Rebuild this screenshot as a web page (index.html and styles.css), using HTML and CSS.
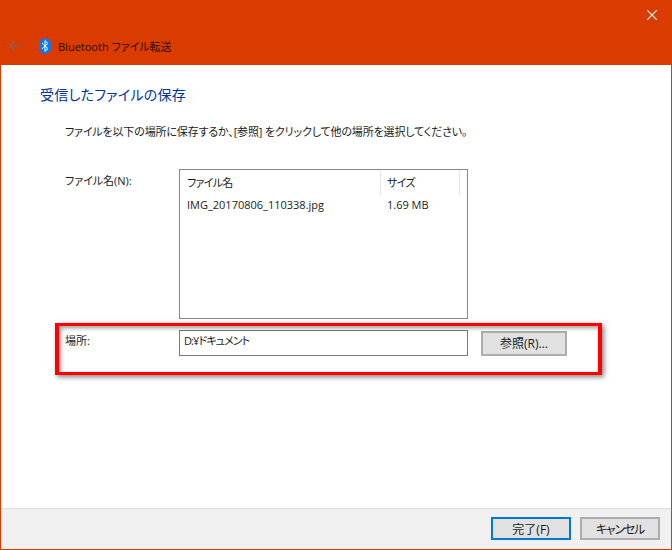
FILE: index.html
```html
<!DOCTYPE html>
<html lang="ja">
<head>
<meta charset="utf-8">
<title>Bluetooth ファイル転送</title>
<link rel="stylesheet" href="styles.css">
</head>
<body>
<div class="window">
  <header class="titlebar">
    <div class="close-row">
      <svg class="close" width="10" height="10" viewBox="0 0 10 10"><path d="M0 0L10 10M10 0L0 10" stroke="#fff" stroke-width="1.1" fill="none"/></svg>
    </div>
    <div class="nav-row">
      <svg class="back" width="13" height="12" viewBox="0 0 13 12"><path d="M6 .8L1 6l5 5.2M1 6h12" stroke="#9c5a44" stroke-width="1.6" fill="none"/></svg>
      <svg class="bt" width="12" height="16" viewBox="0 0 12 16"><rect width="12" height="16" rx="6" ry="6.5" fill="#0a7ae8"/><path d="M3 5.2l6 5.4-3 2.7V2.7l3 2.7-6 5.4" stroke="#fff" stroke-width="1" fill="none"/></svg>
      <span class="nav-title">Bluetooth ファイル転送</span>
    </div>
  </header>
  <main class="content">
    <h1 class="heading">受信したファイルの保存</h1>
    <p class="intro">ファイルを以下の場所に保存するか、[参照] をクリックして他の場所を選択してください。</p>
    <div class="files-row">
      <div class="label">ファイル名(N):</div>
      <div class="listbox">
        <div class="list-head">
          <div class="col-name">ファイル名</div>
          <div class="col-size">サイズ</div>
        </div>
        <div class="list-item">
          <div class="col-name">IMG_20170806_110338.jpg</div>
          <div class="col-size">1.69 MB</div>
        </div>
      </div>
    </div>
    <div class="place-row">
      <div class="label">場所:</div>
      <div class="path-input">D:¥ドキュメント</div>
      <button class="btn browse">参照(R)...</button>
    </div>
    <div class="highlight"></div>
  </main>
  <footer class="footer">
    <button class="btn btn-primary">完了(F)</button>
    <button class="btn btn-cancel">キャンセル</button>
  </footer>
</div>
</body>
</html>
```
FILE: styles.css
```css
* { box-sizing: border-box; }
html, body { margin: 0; padding: 0; }
body {
  width: 672px;
  height: 550px;
  overflow: hidden;
  font-family: "Open Sans", "Noto Sans CJK JP", sans-serif;
  font-size: 11px;
  font-feature-settings: "palt";
  color: #1a1a1a;
  background: #fff;
}
.window {
  width: 672px;
  height: 550px;
  display: flex;
  flex-direction: column;
  border: 1px solid #da3b01;
  border-top: 0;
}
.titlebar {
  height: 65px;
  margin: 0 -1px;
  background: #da3b01;
  display: flex;
  flex-direction: column;
}
.close-row {
  height: 30px;
  display: flex;
  justify-content: flex-end;
  padding: 10px 15px 0 0;
}
.nav-row {
  height: 31px;
  display: flex;
  align-items: center;
  padding-left: 9px;
}
.back { margin-right: 17px; }
.bt { margin-right: 7px; }
.nav-title { color: #2a0f06; }
.content {
  flex: 1;
  position: relative;
  padding: 20px 0 0 39px;
}
.heading {
  margin: 0;
  font-size: 14px;
  font-weight: 400;
  line-height: 20px;
  letter-spacing: .25px;
  color: #003399;
}
.intro {
  margin: 19px 0 0 25px;
  letter-spacing: -.15px;
  line-height: 16px;
}
.files-row {
  display: flex;
  margin: 29px 0 0 25px;
}
.label {
  width: 114px;
  flex: none;
  line-height: 16px;
  padding-top: 4px;
}
.listbox {
  width: 289px;
  height: 150px;
  border: 1px solid #828790;
  padding: 0 7px 0 0;
}
.list-head, .list-item { display: flex; }
.list-head {
  height: 25px;
  border-right: 1px solid #e5e5e5;
}
.list-item { height: 19px; align-items: center; }
.col-name { width: 201px; padding-left: 7px; flex: none; }
.col-size { padding-left: 6px; }
.list-head .col-name, .list-head .col-size { line-height: 26px; letter-spacing: -.7px; }
.list-head .col-name { border-right: 1px solid #e5e5e5; }
.place-row {
  display: flex;
  align-items: flex-start;
  margin: 11px 0 0 25px;
}
.place-row .label { padding-top: 3px; }
.path-input {
  width: 289px;
  height: 26px;
  border: 1px solid #7a7a7a;
  padding: 0 4px;
  line-height: 19px;
  letter-spacing: -.9px;
}
.btn {
  width: 80px;
  height: 23px;
  border: 2px solid #adadad;
  background: #e1e1e1;
  font: inherit;
  font-size: 12px;
  font-feature-settings: "palt";
  color: #1a1a1a;
  padding: 0;
}
.browse { width: 86px; height: 25px; margin: 1px 0 0 13px; padding-bottom: 2px; }
.btn-cancel { letter-spacing: -1.2px; }
.highlight {
  position: absolute;
  left: 54px;
  top: 258px;
  width: 547px;
  height: 52px;
  border: 4px solid #f00;
  border-top-width: 3px;
  border-bottom-width: 3px;
  box-shadow: 2px 2px 5px rgba(0,0,0,.5), inset 2px 2px 4px rgba(0,0,0,.4);
}
.footer {
  height: 41px;
  background: #f0f0f0;
  border-top: 1px solid #dfdfdf;
  display: flex;
  justify-content: flex-end;
  gap: 9px;
  padding: 8px 11px 0 0;
}
.btn-primary { border-color: #0078d7; }
```
